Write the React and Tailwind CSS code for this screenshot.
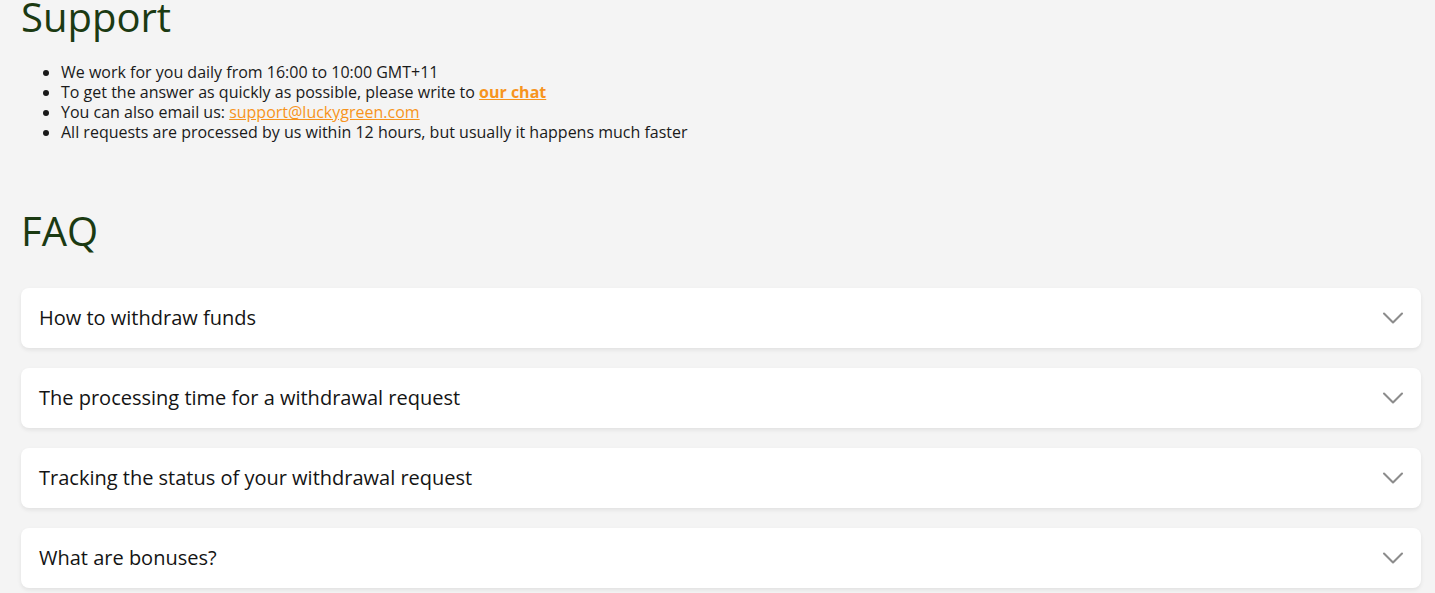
import { ChevronDown } from 'lucide-react';

const faqItems = [
  'How to withdraw funds',
  'The processing time for a withdrawal request',
  'Tracking the status of your withdrawal request',
  'What are bonuses?',
];

const FaqItem = ({ title }) => (
  <button className="w-full h-[60px] flex items-center justify-between pl-[18px] pr-[10px] bg-white rounded-lg shadow-[0_2px_4px_rgba(0,0,0,0.08)] text-left">
    <span className="text-[20px] text-[#141414]">{title}</span>
    <ChevronDown className="w-[36px] h-[36px] text-[#8c8c8c]" strokeWidth={1.4} />
  </button>
);

export default function App() {
  return (
    <div
      className="min-h-screen bg-[#f4f4f4] pl-[21px] pr-[14px] pb-10"
      style={{ fontFamily: '"Open Sans", "Liberation Sans", sans-serif' }}
    >
      <h1 className="text-[40px] leading-[40px] -mt-[3px] text-[#1b3a12] font-normal">Support</h1>

      <ul className="mt-[25px] pl-[40px] list-disc text-[16px] leading-[20px] text-[#1a1a1a]">
        <li>We work for you daily from 16:00 to 10:00 GMT+11</li>
        <li>
          To get the answer as quickly as possible, please write to{' '}
          <a href="#" className="font-bold text-[#f7941d] underline">our chat</a>
        </li>
        <li>
          You can also email us:{' '}
          <a href="#" className="text-[#f7941d] underline">support@luckygreen.com</a>
        </li>
        <li>All requests are processed by us within 12 hours, but usually it happens much faster</li>
      </ul>

      <h2 className="mt-[69px] text-[40px] leading-[40px] text-[#1b3a12] font-normal">FAQ</h2>

      {/* FAQ list */}
      <div className="mt-[37px] flex flex-col gap-5">
        {faqItems.map((item) => (
          <FaqItem key={item} title={item} />
        ))}
      </div>
    </div>
  );
}
